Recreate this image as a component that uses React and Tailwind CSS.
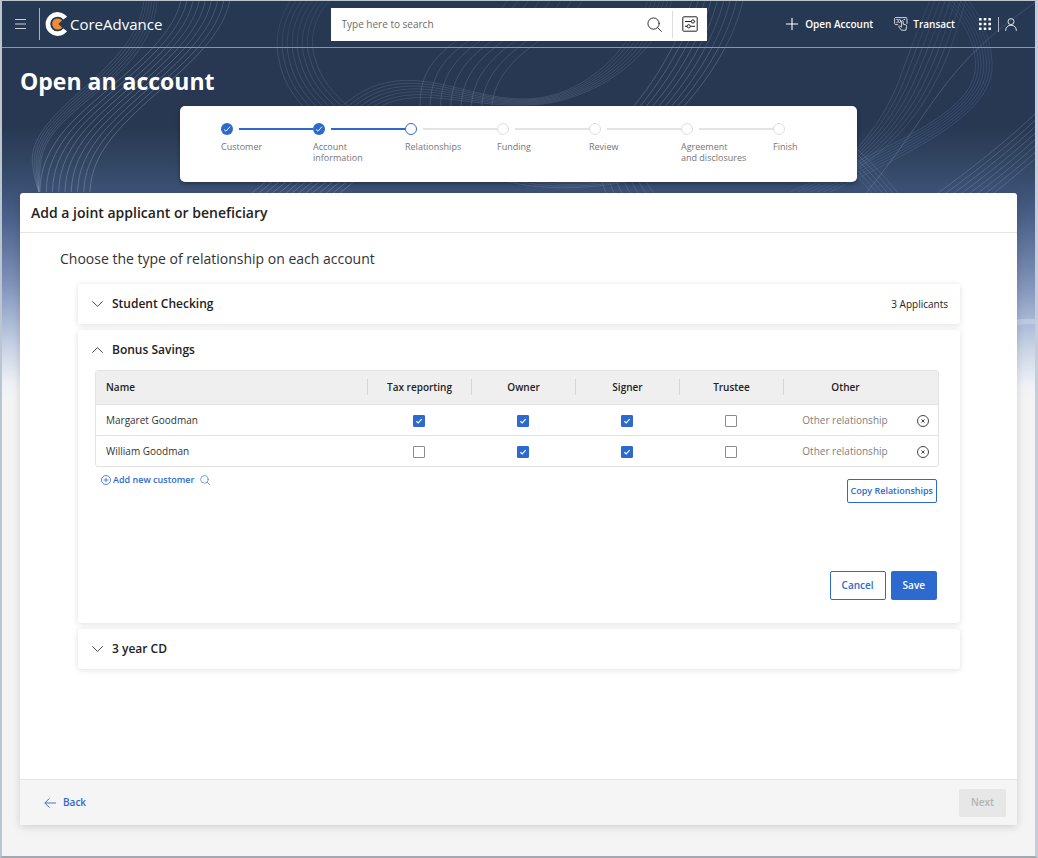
import React, { useState } from 'react';

const STEPS = [
  { label: 'Customer', status: 'done' },
  { label: 'Account\ninformation', status: 'done' },
  { label: 'Relationships', status: 'current' },
  { label: 'Funding', status: 'todo' },
  { label: 'Review', status: 'todo' },
  { label: 'Agreement\nand disclosures', status: 'todo' },
  { label: 'Finish', status: 'todo' },
];

const ROLES = ['Tax reporting', 'Owner', 'Signer', 'Trustee'];

const APPLICANTS = [
  { name: 'Margaret Goodman', roles: ['Tax reporting', 'Owner', 'Signer'] },
  { name: 'William Goodman', roles: ['Owner', 'Signer'] },
];

// Each bundle blends from one cubic path to another: [x, y] points, M then C triples
const WAVES = [
  { n: 6, color: '#9fb0cc', opacity: 0.22, from: [144, 0, 136, 75, 22, 110, 33, 168, 34, 176, 36, 184, 39, 192], to: [157, 0, 152, 80, 50, 105, 41, 160, 40, 170, 39, 182, 39, 192] },
  { n: 9, color: '#b4c2d8', opacity: 0.3, from: [181, 0, 172, 45, 108, 85, 72, 122, 52, 143, 40, 165, 40, 192], to: [230, 0, 222, 45, 165, 82, 128, 120, 104, 144, 91, 165, 90, 192] },
  { n: 8, color: '#9fb0cc', opacity: 0.18, from: [291, 0, 277, 20, 275, 45, 279, 60, 283, 80, 291, 93, 303, 106], to: [330, 0, 313, 18, 309, 42, 315, 58, 321, 80, 333, 93, 348, 106] },
  { n: 7, color: '#9fb0cc', opacity: 0.18, from: [338, 110, 400, 50, 460, 100, 525, 99, 585, 98, 630, 50, 648, 0], to: [366, 116, 410, 80, 460, 108, 530, 105, 600, 102, 660, 50, 672, 0] },
  { n: 8, color: '#b4c2d8', opacity: 0.18, from: [420, 106, 420, 75, 432, 60, 452, 44, 476, 26, 496, 18, 508, 0], to: [492, 106, 494, 80, 512, 60, 536, 43, 560, 27, 576, 16, 582, 0] },
  { n: 9, color: '#b4c2d8', opacity: 0.26, from: [634, 106, 652, 84, 665, 62, 674, 44, 682, 28, 688, 14, 692, 0], to: [684, 106, 704, 84, 718, 62, 727, 44, 735, 28, 740, 14, 743, 0] },
  { n: 8, color: '#a0b2d0', opacity: 0.18, from: [930, 0, 918, 30, 910, 50, 900, 78, 890, 105, 875, 130, 852, 154], to: [966, 0, 957, 30, 948, 60, 932, 88, 916, 118, 890, 148, 852, 172] },
  { n: 7, color: '#6f92cf', opacity: 0.22, from: [942, 0, 966, 20, 978, 50, 975, 72, 968, 112, 905, 140, 790, 192], to: [968, 0, 985, 22, 993, 48, 992, 70, 987, 115, 920, 148, 830, 192] },
  { n: 8, color: '#9fb0cc', opacity: 0.26, from: [1036, 113, 1010, 138, 975, 166, 938, 193], to: [1036, 158, 1022, 170, 1008, 182, 994, 193] },
  { n: 6, color: '#9fb0cc', opacity: 0.2, from: [850, 168, 858, 176, 864, 184, 872, 193], to: [850, 143, 868, 158, 884, 176, 898, 193] },
  { n: 1, color: '#8fa4c4', opacity: 0.3, from: [1036, 2, 940, 68, 938, 105, 866, 193], to: [1036, 2, 940, 68, 938, 105, 866, 193] },
  { n: 6, color: '#b4c2d8', opacity: 0.3, from: [252, 193, 262, 185, 270, 178, 276, 172], to: [286, 193, 296, 185, 304, 178, 310, 172] },
  { n: 8, color: '#b4c2d8', opacity: 0.32, from: [292, 193, 304, 183, 312, 177, 318, 172], to: [340, 193, 352, 183, 360, 177, 366, 172] },
  { n: 5, color: '#b4c2d8', opacity: 0.2, from: [480, 172, 520, 192, 600, 194, 660, 172], to: [520, 172, 550, 184, 610, 184, 640, 172] },
  { n: 7, color: '#9fb0cc', opacity: 0.22, from: [600, 176, 602, 182, 604, 188, 606, 193], to: [644, 176, 646, 182, 650, 188, 654, 193] },
];

function wavePath(from, to, t) {
  const p = from.map((v, i) => (v + (to[i] - v) * t).toFixed(1));
  return `M${p[0]} ${p[1]}C${p.slice(2).join(' ')}`;
}

function HeroBackground() {
  return (
    <div className="absolute inset-x-0 top-0 -z-10 h-[400px] bg-[linear-gradient(to_bottom,#283853_0px,#283853_125px,#30435f_155px,#3a4f72_185px,#4a5f87_215px,#6478a0_250px,#8394bb_285px,#a3b3d2_315px,#ccd6e7_350px,#f0f2f7_385px,#f4f4f4_400px)]">
      <svg
        className="h-full w-full"
        viewBox="2 1 1033 400"
        preserveAspectRatio="xMidYMin slice"
        fill="none"
        aria-hidden="true"
      >
        {WAVES.map((wave, w) => (
          <g key={w} stroke={wave.color} strokeOpacity={wave.opacity}>
            {Array.from({ length: wave.n }, (_, i) => (
              <path key={i} d={wavePath(wave.from, wave.to, i / Math.max(1, wave.n - 1))} />
            ))}
          </g>
        ))}
        <path d="M1000 322Q1018 318 1036 319V324Q1018 324 1000 328Z" fill="#c3d2e6" fillOpacity="0.7" />
      </svg>
    </div>
  );
}

function Logo() {
  return (
    <svg className="h-6 w-6" viewBox="0 0 24 24" fill="none" aria-hidden="true">
      <path d="M20.2 6.2A9.6 9.6 0 1 0 20.2 17.8" stroke="#fff" strokeWidth="4.6" />
      <path d="M13.4 12 17.2 8.6A5.6 5.6 0 1 0 17.2 15.4Z" fill="#f08a33" />
    </svg>
  );
}

function SearchIcon({ className }) {
  return (
    <svg className={className} viewBox="0 0 16 16" fill="none" stroke="currentColor" strokeLinecap="round" aria-hidden="true">
      <circle cx="7" cy="7" r="6" />
      <path d="m11.4 11.4 4 4" />
    </svg>
  );
}

function FilterIcon() {
  return (
    <svg className="h-4 w-4" viewBox="0 0 16 16" fill="none" stroke="#222" aria-hidden="true">
      <rect x="0.8" y="0.8" width="14.4" height="14.4" rx="1" />
      <path d="M3 5.5h6.2M12.6 5.5h.6M3 10.3h2M8.4 10.3h4.6" />
      <circle cx="10.9" cy="5.5" r="1.6" />
      <circle cx="6.7" cy="10.3" r="1.6" />
    </svg>
  );
}

function TransactIcon() {
  return (
    <svg className="h-[14px] w-[14px]" viewBox="0 0 14 14" fill="none" stroke="#fff" strokeWidth="0.8" strokeLinejoin="round" aria-hidden="true">
      <path d="M4.2 7.6H1.4L.6 6.8V1.4L1.4.6h10.8l.8.8v5l-.6.8" />
      <path d="M2.4 2.5h1.4M2.4 5.6h1.2M9.6 2.5h1.6" />
      <circle cx="5.4" cy="4" r="1.4" />
      <path d="M7.6 9.8V4.5c0-1.1 1.6-1.1 1.6 0v2.7l2.6.7c.6.2.9.7.8 1.4l-.7 3.9H7.4L5 10.2c-.6-.9.4-1.6 1.1-1.1l1.5 1.2" />
    </svg>
  );
}

function AppsIcon() {
  return (
    <svg className="h-3 w-3" viewBox="0 0 12 12" fill="#fff" aria-hidden="true">
      {[0, 4.7, 9.4].map((y) => [0, 4.7, 9.4].map((x) => <rect key={`${x}-${y}`} x={x} y={y} width="2.6" height="2.6" rx="0.4" />))}
    </svg>
  );
}

function Chevron({ up }) {
  return (
    <svg className="h-[6px] w-[11px]" viewBox="0 0 11 6" fill="none" stroke="#333" strokeWidth="0.9" aria-hidden="true">
      <path d={up ? 'M.3 5.7 5.5.6l5.2 5.1' : 'M.3.3l5.2 5.1L10.7.3'} />
    </svg>
  );
}

function Header() {
  return (
    <header className="grid h-[47px] grid-cols-[1fr_376px_1fr] items-center border-b border-[#8b97a9] bg-[#283853]/30 px-[13px]">
      <div className="flex items-center">
        <button type="button" aria-label="Menu" className="pr-[13px]">
          <svg className="h-3 w-[11px]" viewBox="0 0 11 12" stroke="#c9d0da" aria-hidden="true">
            <path d="M0 1.5h11M0 6h11M0 10.5h11" />
          </svg>
        </button>
        <a href="#home" className="flex h-8 items-center border-l border-[#aab3c0] pl-[5px]">
          <Logo />
          <span className="ml-px text-[15px] leading-5 font-medium text-white">CoreAdvance</span>
        </a>
      </div>

      <form role="search" className="flex h-[33px] items-center bg-white" onSubmit={(e) => e.preventDefault()}>
        <input
          type="text"
          aria-label="Search"
          placeholder="Type here to search"
          className="min-w-0 flex-1 pl-[11px] text-[10px] text-[#333] outline-none placeholder:text-[#6b6b6b]"
        />
        <button type="submit" aria-label="Search" className="px-[10px] text-[#222]">
          <SearchIcon className="h-[15px] w-[15px]" />
        </button>
        <button type="button" aria-label="Search filters" className="flex h-[27px] items-center border-l border-[#dcdcdc] px-[9px]">
          <FilterIcon />
        </button>
      </form>

      <div className="flex items-center justify-end pr-[5px] text-[10px] leading-4 font-semibold text-white">
        <button type="button" className="flex items-center gap-[7px]">
          <svg className="h-3 w-3" viewBox="0 0 12 12" stroke="#fff" strokeWidth="1.1" aria-hidden="true">
            <path d="M6 0v12M0 6h12" />
          </svg>
          Open Account
        </button>
        <button type="button" className="ml-[21px] flex items-center gap-[5px]">
          <TransactIcon />
          Transact
        </button>
        <button type="button" aria-label="Apps" className="ml-6 pr-[7px]">
          <AppsIcon />
        </button>
        <button type="button" aria-label="Profile" className="flex h-[15px] items-center border-l border-[#aab3c0] pl-[6px]">
          <svg className="h-[13px] w-3" viewBox="0 0 12 13" fill="none" stroke="#dfe4eb" aria-hidden="true">
            <circle cx="6" cy="3.6" r="3" />
            <path d="M.6 12.8C.8 9 3 7.2 6 7.2s5.2 1.8 5.4 5.6" />
          </svg>
        </button>
      </div>
    </header>
  );
}

function StepMarker({ status }) {
  if (status === 'done') {
    return (
      <svg className="h-3 w-3 shrink-0" viewBox="0 0 12 12" fill="none" aria-hidden="true">
        <circle cx="6" cy="6" r="6" fill="#2d6acf" />
        <path d="m3 6.4 2 1.8 4-4.5" stroke="#fff" strokeWidth="0.9" />
      </svg>
    );
  }
  if (status === 'current') return <span className="h-3 w-3 shrink-0 rounded-full border border-[#2d6acf] bg-white" />;
  return <span className="h-3 w-3 shrink-0 rounded-full border border-[#dedede] bg-white" />;
}

function Stepper() {
  return (
    <ol className="mx-auto flex h-[76px] w-full max-w-[677px] rounded-[5px] bg-white pt-[17px] pr-[60px] pl-[41px] shadow-[0_2px_4px_rgba(0,0,0,0.35)]">
      {STEPS.map((step, i) => {
        const last = i === STEPS.length - 1;
        return (
          <li key={step.label} className={last ? 'w-6' : 'flex-1'} aria-current={step.status === 'current' ? 'step' : undefined}>
            <div className="flex items-center">
              <StepMarker status={step.status} />
              {!last && <span className={`ml-[6px] h-[2px] flex-1 ${step.status === 'done' ? 'bg-[#2d6acf]' : 'bg-[#e3e3e3]'}`} />}
            </div>
            <p className="mt-[6px] text-[9px] leading-[11px] whitespace-pre text-[#757575]">{step.label}</p>
          </li>
        );
      })}
    </ol>
  );
}

function Checkbox({ label, defaultChecked }) {
  return (
    <label className="inline-grid h-3 w-3 align-middle">
      <input
        type="checkbox"
        aria-label={label}
        defaultChecked={defaultChecked}
        className="peer col-start-1 row-start-1 h-3 w-3 appearance-none rounded-[1px] border border-[#8c8c8c] bg-white checked:border-[#2d6acf] checked:bg-[#2d6acf]"
      />
      <svg className="pointer-events-none invisible col-start-1 row-start-1 h-3 w-3 peer-checked:visible" viewBox="0 0 12 12" fill="none" stroke="#fff" strokeWidth="1.2" aria-hidden="true">
        <path d="m3.4 6.2 1.8 1.7 3.5-3.7" />
      </svg>
    </label>
  );
}

function RelationshipTable() {
  return (
    <div className="overflow-hidden rounded-[3px] border border-[#e2e2e2]">
      <table className="w-full table-fixed text-[10px] leading-4 text-[#333]">
        <colgroup>
          <col />
          {ROLES.map((role) => <col key={role} className="w-[104px]" />)}
          <col className="w-[124px]" />
          <col className="w-[31px]" />
        </colgroup>
        <thead>
          <tr className="h-[33px] border-b border-[#e2e2e2] bg-[#efefef] text-[#222]">
            <th scope="col" className="p-0 pl-[10px] text-left font-semibold">Name</th>
            {[...ROLES, 'Other'].map((col) => (
              <th key={col} scope="col" className="p-0 font-semibold">
                <div className="border-l border-[#d6d6d6]">{col}</div>
              </th>
            ))}
            <th scope="col" aria-label="Remove" />
          </tr>
        </thead>
        <tbody>
          {APPLICANTS.map((person) => (
            <tr key={person.name} className="h-[31px] border-b border-[#e2e2e2] last:border-b-0">
              <td className="p-0 pl-[10px]">{person.name}</td>
              {ROLES.map((role) => (
                <td key={role} className="p-0 text-center">
                  <Checkbox label={`${person.name}: ${role}`} defaultChecked={person.roles.includes(role)} />
                </td>
              ))}
              <td className="p-0">
                <input
                  type="text"
                  aria-label={`${person.name}: other relationship`}
                  placeholder="Other relationship"
                  className="w-full text-center outline-none placeholder:text-[#808080]"
                />
              </td>
              <td className="p-0 text-center">
                <button type="button" aria-label={`Remove ${person.name}`} className="align-middle">
                  <svg className="h-3 w-3" viewBox="0 0 12 12" fill="none" stroke="#333" strokeWidth="0.9" aria-hidden="true">
                    <circle cx="6" cy="6" r="5.5" />
                    <path d="m4.4 4.4 3.2 3.2M7.6 4.4 4.4 7.6" />
                  </svg>
                </button>
              </td>
            </tr>
          ))}
        </tbody>
      </table>
    </div>
  );
}

function AccountPanel({ title, note, open, onToggle, children }) {
  return (
    <section className="rounded-[3px] bg-white shadow-[0_1px_6px_rgba(0,0,0,0.13)]">
      <h3>
        <button type="button" aria-expanded={open} onClick={onToggle} className="flex h-10 w-full items-center pr-3 pl-[14px] text-[#222]">
          <Chevron up={open} />
          <span className="ml-[9px] text-xs font-semibold">{title}</span>
          {note && <span className="ml-auto text-[10px]">{note}</span>}
        </button>
      </h3>
      {open && children}
    </section>
  );
}

function BonusSavings() {
  return (
    <div className="pr-[21px] pb-[23px] pl-[17px]">
      <RelationshipTable />
      <div className="flex items-start justify-between pr-[2px]">
        <div className="ml-[6px] flex items-center gap-[6px] pt-[5px] text-[#2d6acf]">
          <button type="button" className="flex items-center gap-[2px] text-[9px] leading-4 font-semibold">
            <svg className="h-[10px] w-[10px]" viewBox="0 0 10 10" fill="none" stroke="currentColor" strokeWidth="0.8" aria-hidden="true">
              <circle cx="5" cy="5" r="4.5" />
              <path d="M5 2.6v4.8M2.6 5h4.8" />
            </svg>
            Add new customer
          </button>
          <button type="button" aria-label="Find customer">
            <SearchIcon className="h-[10px] w-[10px]" />
          </button>
        </div>
        <button type="button" className="mt-3 h-6 rounded-[2px] border border-[#2d6acf] px-[3px] text-[9px] font-semibold text-[#2d6acf]">
          Copy Relationships
        </button>
      </div>
      <div className="mt-[68px] flex justify-end gap-[5px] pr-[2px] text-[10px] font-semibold">
        <button type="button" className="h-[29px] rounded-[2px] border border-[#2d6acf] px-[11px] text-[#2d6acf]">Cancel</button>
        <button type="button" className="h-[29px] rounded-[2px] bg-[#2d6acf] px-3 text-white">Save</button>
      </div>
    </div>
  );
}

export default function App() {
  const [openPanel, setOpenPanel] = useState('bonus');

  const toggle = (id) => setOpenPanel(openPanel === id ? null : id);

  return (
    <div className="flex min-h-screen flex-col border-t border-r-[3px] border-b-2 border-l-2 border-t-[#b9c5cf] border-r-[#c3ced8] border-b-[#a3a9b2] border-l-[#b9c5cf] bg-[#f4f4f4] font-['Open_Sans','Noto_Sans',sans-serif]">
      <div className="relative isolate flex flex-1 flex-col">
        <HeroBackground />
        <Header />

        <h1 className="px-[18px] pt-[17px] pb-2 text-[23px] leading-[33px] font-bold text-white">Open an account</h1>
        <Stepper />

        <main className="mx-[18px] mt-[11px] mb-[31px] flex flex-1 flex-col rounded-[3px] bg-white shadow-[0_2px_8px_rgba(0,0,0,0.15)]">
          <h2 className="h-10 border-b border-[#e4e4e4] px-[11px] text-[14px] leading-[39px] font-semibold text-[#222]">
            Add a joint applicant or beneficiary
          </h2>

          <div className="flex-1 px-10 pt-4 pb-10">
            <p className="text-[14px] leading-5 text-[#333]">Choose the type of relationship on each account</p>
            <div className="mt-[15px] mr-[17px] ml-[18px] flex flex-col gap-[6px]">
              <AccountPanel title="Student Checking" note="3 Applicants" open={openPanel === 'student'} onToggle={() => toggle('student')} />
              <AccountPanel title="Bonus Savings" open={openPanel === 'bonus'} onToggle={() => toggle('bonus')}>
                <BonusSavings />
              </AccountPanel>
              <AccountPanel title="3 year CD" open={openPanel === 'cd'} onToggle={() => toggle('cd')} />
            </div>
          </div>

          <footer className="flex h-[46px] items-center justify-between border-t border-[#e2e5e7] bg-[#f5f5f5] pr-[11px] pl-6 text-[10px] font-semibold">
            <a href="#back" className="flex items-center gap-[7px] text-[#2d6acf]">
              <svg className="h-[10px] w-3" viewBox="0 0 12 10" fill="none" stroke="currentColor" strokeWidth="0.9" aria-hidden="true">
                <path d="M12 5H.8M5.4.4.8 5l4.6 4.6" />
              </svg>
              Back
            </a>
            <button type="button" disabled className="h-7 rounded-[2px] bg-[#e7e7e7] px-3 text-[#b3b3b3]">Next</button>
          </footer>
        </main>
      </div>
    </div>
  );
}
